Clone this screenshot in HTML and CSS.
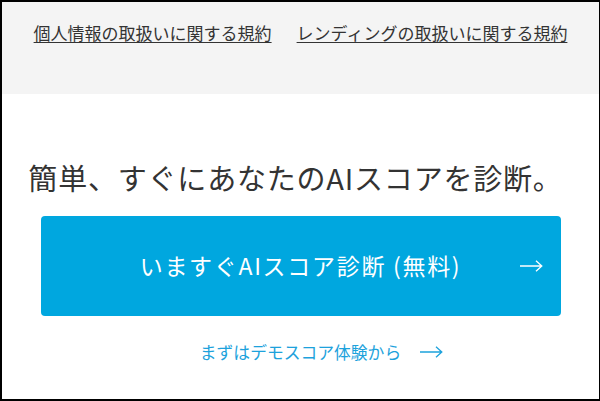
FILE: index.html
```html
<!DOCTYPE html>
<html lang="ja">
<head>
<meta charset="utf-8">
<link rel="stylesheet" href="styles.css">
</head>
<body>
<div class="frame">
  <header class="header">
    <a class="rule-link" href="#">個人情報の取扱いに関する規約</a>
    <a class="rule-link" href="#">レンディングの取扱いに関する規約</a>
  </header>
  <main class="main">
    <h1 class="headline">簡単、すぐにあなたのAIスコアを診断。</h1>
    <a class="cta" href="#">
      <span class="cta-label">いますぐAIスコア診断 (無料)</span>
      <svg class="cta-arrow" width="23" height="12" viewBox="0 0 23 12"><path d="M0 6H21.5M16 0.8L21.8 6L16 11.2" fill="none" stroke="#fff" stroke-width="1.3"/></svg>
    </a>
    <div class="demo-row">
      <a class="demo" href="#">まずはデモスコア体験から<svg class="demo-arrow" width="23" height="12" viewBox="0 0 23 12"><path d="M0 6H21.5M16 0.8L21.8 6L16 11.2" fill="none" stroke="#1da2dc" stroke-width="1.3"/></svg></a>
    </div>
  </main>
</div>
</body>
</html>
```
FILE: styles.css
```css
html, body {
  margin: 0;
  padding: 0;
  background: #fff;
}
body {
  font-family: "Noto Sans CJK JP", "Noto Sans", sans-serif;
}
.frame {
  width: 600px;
  height: 401px;
  box-sizing: border-box;
  border: 2px solid #000;
  border-right-width: 1px;
  overflow: hidden;
}
.header {
  height: 92px;
  box-sizing: border-box;
  background: #f4f4f4;
  display: flex;
  justify-content: center;
  gap: 25px;
  padding-top: 19px;
}
.rule-link {
  font-size: 17px;
  line-height: 24px;
  height: 24px;
  color: #333;
  text-decoration: underline;
  text-underline-offset: 2px;
}
.main {
  display: flex;
  flex-direction: column;
  align-items: center;
}
.headline {
  margin: 63px 10px 0 0;
  font-size: 29px;
  font-weight: 400;
  line-height: 40px;
  color: #333;
  letter-spacing: 0.8px;
}
.cta {
  position: relative;
  margin-top: 19px;
  width: 520px;
  height: 100px;
  border-radius: 4px;
  background: #00a7df;
  display: flex;
  align-items: center;
  justify-content: center;
  text-decoration: none;
}
.cta-label {
  color: #fff;
  font-size: 23px;
  line-height: 30px;
  letter-spacing: 1.7px;
  margin-top: -3px;
}
.cta-arrow {
  position: absolute;
  right: 18px;
  top: 44px;
}
.demo-row {
  margin-top: 24px;
  display: flex;
  justify-content: center;
}
.demo {
  position: relative;
  font-size: 16.8px;
  line-height: 24px;
  color: #1da2dc;
  text-decoration: none;
}
.demo-arrow {
  position: absolute;
  left: calc(100% + 19px);
  top: 6px;
}
```
